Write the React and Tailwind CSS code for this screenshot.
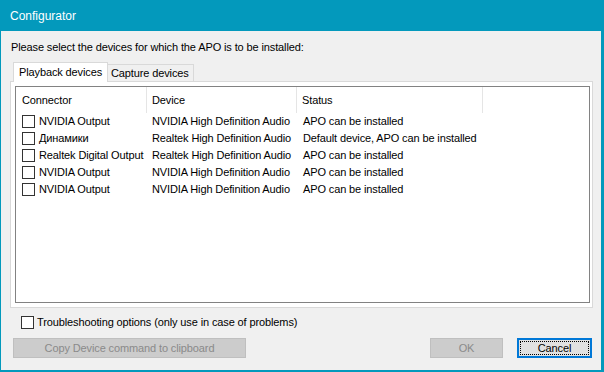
const rows = [
  ['NVIDIA Output', 'NVIDIA High Definition Audio', 'APO can be installed'],
  ['Динамики', 'Realtek High Definition Audio', 'Default device, APO can be installed'],
  ['Realtek Digital Output', 'Realtek High Definition Audio', 'APO can be installed'],
  ['NVIDIA Output', 'NVIDIA High Definition Audio', 'APO can be installed'],
  ['NVIDIA Output', 'NVIDIA High Definition Audio', 'APO can be installed'],
];

function Box() {
  return <span className="w-[13px] h-[13px] shrink-0 border border-[#333333] bg-white" />;
}

export default function App() {
  return (
    <div
      className="w-[604px] h-[372px] flex flex-col bg-[#0399bc] pl-px pr-[3px] pb-[2px] text-[11px] text-black"
      style={{ fontFamily: '"Liberation Sans", Arial, sans-serif' }}
    >
      <div className="h-[31px] shrink-0 flex items-center pl-[9px] text-[12px] text-white">Configurator</div>

      <div className="flex-1 bg-[#f0f0f0] flex flex-col pl-[9px] pr-[8px] tracking-[-0.12px]">
        <div className="h-[16px] mt-[8px] flex items-center pl-px">Please select the devices for which the APO is to be installed:</div>

        <div className="flex items-end h-[20px] mt-[7px] -mb-px ml-[3px] relative z-10">
          <div className="w-[95px] h-[20px] bg-white border border-b-0 border-[#d9d9d9] flex items-center pl-[5px]">Playback devices</div>
          <div className="w-[86px] h-[17px] mb-px bg-[#f0f0f0] border-t border-r border-[#d9d9d9] flex items-center pl-[3px]">Capture devices</div>
        </div>

        <div className="h-[227px] border border-[#d9d9d9] bg-white pl-[4px] pr-[2px] py-[4px] flex">
          <div className="flex-1 border border-[#828282] bg-white flex flex-col">
            <div className="h-[26px] flex">
              <div className="w-[131px] border-r border-[#e5e5e5] flex items-center pl-[6px]">Connector</div>
              <div className="w-[150px] border-r border-[#e5e5e5] flex items-center pl-[5px]">Device</div>
              <div className="w-[186px] border-r border-[#e5e5e5] flex items-center pl-[5px]">Status</div>
            </div>
            {rows.map((r, i) => (
              <div key={i} className="h-[17px] flex items-center">
                <div className="w-[131px] flex items-center gap-[4px] pl-[6px] whitespace-nowrap"><Box />{r[0]}</div>
                <div className="w-[150px] pl-[5px] whitespace-nowrap">{r[1]}</div>
                <div className="w-[186px] pl-[6px] whitespace-nowrap">{r[2]}</div>
              </div>
            ))}
          </div>
        </div>

        <div className="flex items-center gap-[3px] mt-[8px] ml-[11px] h-[13px]">
          <Box />
          <span>Troubleshooting options (only use in case of problems)</span>
        </div>

        <div className="flex items-center mt-[9px] h-[20px]">
          <div className="ml-[3px] w-[233px] h-[20px] bg-[#cccccc] border border-[#bfbfbf] flex items-center justify-center text-[#8a8a8a]">Copy Device command to clipboard</div>
          <div className="ml-auto w-[73px] h-[20px] bg-[#cccccc] border border-[#bfbfbf] flex items-center justify-center text-[#8a8a8a]">OK</div>
          <div className="ml-[14px] mr-px w-[75px] h-[20px] bg-[#e1e1e1] border-2 border-[#0078d7] p-px flex">
            <div className="flex-1 border border-dotted border-black flex items-center justify-center">Cancel</div>
          </div>
        </div>
      </div>
    </div>
  );
}
